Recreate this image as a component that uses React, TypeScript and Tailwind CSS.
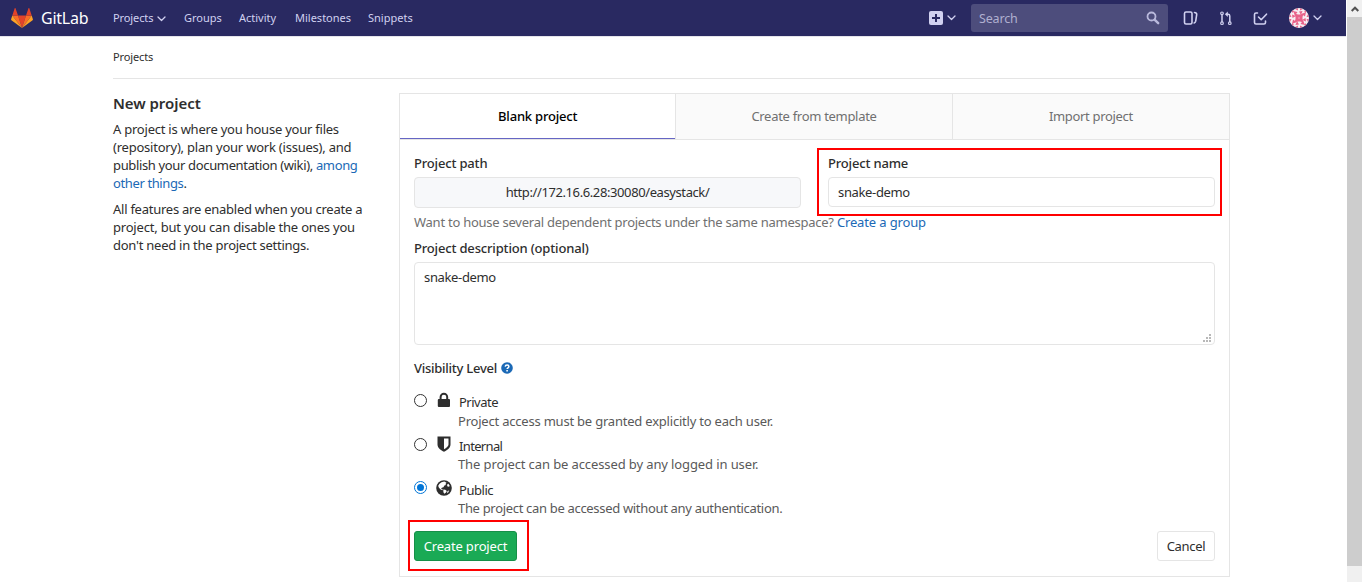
import React from "react";

const Chevron = ({ className = "" }: { className?: string }) => (
  <svg className={className} width="9" height="6" viewBox="0 0 9 6" fill="none" stroke="currentColor" strokeWidth="1.300" strokeLinecap="round" strokeLinejoin="round">
    <path d="M1 1l3.500 3.500L8 1" />
  </svg>
);

const Logo = () => (
  <svg width="22" height="20" viewBox="0 0 22 20">
    <path fill="#e24329" d="M11 20L15 7.6H7z" />
    <path fill="#fc6d26" d="M11 20L7 7.6H1.3z" />
    <path fill="#fca326" d="M1.3 7.6L.1 11.3c-.1.4 0 .8.3 1L11 20z" />
    <path fill="#e24329" d="M1.3 7.6H7L4.5.3c-.1-.4-.7-.4-.8 0z" />
    <path fill="#fc6d26" d="M11 20l4-12.4h5.7z" />
    <path fill="#fca326" d="M20.7 7.6l1.2 3.7c.1.4 0 .8-.3 1L11 20z" />
    <path fill="#e24329" d="M20.7 7.6H15L17.5.3c.1-.4.7-.4.8 0z" />
  </svg>
);

const Avatar = () => (
  <svg width="20" height="20" viewBox="0 0 20 20">
    <defs><clipPath id="round"><circle cx="10" cy="10" r="10" /></clipPath></defs>
    <g clipPath="url(#round)">
      <path fill="#f6eef2" d="M0 0h20v20H0z" />
      <g fill="#e8638a">
        <path d="M5.500 5.500l3.500 1h2l3.500-1-1 3.500v2l1 3.500-3.500-1H9l-3.500 1 1-3.500V9z" />
        <path d="M4 3l4.500 1L6 7.500zM17 4l-1 4.500L12.500 6zM16 17l-4.500-1L14 12.500zM3 16l1-4.500L7.500 14z" />
        <path d="M10 3.500l3.500-.5-1.500 4zM16.500 10l.5 3.500-4-1.500zM10 16.500l-3.500.5 1.500-4zM3.500 10L3 6.500 7 8z" />
        <path d="M6 1l3-1v2.500zM11 0l3 1-3 1.500zM19 6l1 3h-2.500zM20 11l-1 3-1.500-3zM14 19l-3 1v-2.500zM9 20l-3-1 3-1.500zM1 14l-1-3h2.500zM0 9l1-3 1.500 3z" />
        <path d="M3 2l2 1-2 2zM17 2v3l-2-2zM17 18l-2-1 2-2zM3 18v-3l2 2z" />
      </g>
      <path fill="#f6eef2" d="M9.500 9.500h1v1h-1z" />
    </g>
  </svg>
);

const Lock = () => (
  <svg width="14" height="16" viewBox="0 0 14 16">
    <rect x="0.800" y="7" width="12.200" height="8" rx="1" fill="#2e2e2e" />
    <path d="M3.600 7.500V5a3.300 3.300 0 0 1 6.600 0v2.500" fill="none" stroke="#2e2e2e" strokeWidth="2" />
  </svg>
);

const Shield = () => (
  <svg width="14" height="16" viewBox="0 0 14 16" fill="#2e2e2e">
    <path fillRule="evenodd" d="M.5.5h13v8c0 3.400-3.600 6-6.500 7.200C4.100 14.500.5 11.900.5 8.500zM7 2.500v10.700c2.400-1.300 4.500-2.900 4.500-4.700v-6z" />
  </svg>
);

const Globe = () => (
  <svg width="16" height="16" viewBox="0 0 16 16">
    <circle cx="8" cy="8" r="7.800" fill="#2e2e2e" />
    <path fill="#fff" d="M5.500 2.200l2.800-.6 2.200 1.100-1 1.200.4 1-1.500.7-1 1.700-1.600.5-.7 1 1.800.6-.6.800-2-1L2.800 7.500 2.200 5.700l1.300-2z" />
    <path fill="#fff" d="M7.300 9.500l2 .3 1.500 1.200-.8 1.500-1.600 1.300-1-1.600zM11.200 4.500l1.200-.8 1.400 2.200-1 .9-1.600-.6zM11.200 11.500l2-1.200-.8 2-1.200.9z" />
  </svg>
);

const Radio = ({ on = false }: { on?: boolean }) => (
  <span className={on
    ? "flex size-[13px] items-center justify-center rounded-full border border-[#0075d7] bg-white"
    : "mt-px flex size-[13px] items-center justify-center rounded-full border border-[#333] bg-white"}>
    {on && <span className="size-[7px] rounded-full bg-[#0075d7]" />}
  </span>
);

const levels = [
  { name: "Private", icon: <Lock />, text: "Project access must be granted explicitly to each user.", nameClass: "tracking-[-0.5px]", textClass: "pt-px tracking-[-0.21px]" },
  { name: "Internal", icon: <Shield />, text: "The project can be accessed by any logged in user.", nameClass: "tracking-[-0.65px]", textClass: "tracking-[-0.11px]" },
  { name: "Public", icon: <Globe />, text: "The project can be accessed without any authentication.", nameClass: "tracking-[-0.45px]", textClass: "tracking-[-0.32px]" },
];

const Header = () => (
  <header className="flex h-9 items-center bg-[#292961] text-[11px] leading-4 text-[#d1d1f0]">
    <div className="ml-[11px] flex w-[102px] items-center">
      <Logo />
      <span className="ml-2 text-[16px] leading-5 tracking-[-0.25px] text-white">GitLab</span>
    </div>
    <nav className="flex items-center">
      <span className="w-[71px] whitespace-nowrap tracking-[-0.1px]">Projects<Chevron className="ml-1 inline-block" /></span>
      <span className="w-[55px]">Groups</span>
      <span className="w-[56px]">Activity</span>
      <span className="w-[73px]">Milestones</span>
      <span>Snippets</span>
    </nav>
    <div className="ml-auto flex items-center">
      <svg width="14" height="14" viewBox="0 0 14 14"><rect width="14" height="14" rx="2" fill="#d1d1f0" /><path d="M7 3v8M3 7h8" stroke="#292961" strokeWidth="2" /></svg>
      <Chevron className="ml-1" />
      <div className="ml-[15px] flex h-7 w-[197px] items-center justify-between rounded-[3px] bg-[#4d4d7c] pr-2 pl-2 text-[12.5px] text-[#b0b0d0]">
        <span className="pt-px tracking-[-0.15px]">Search</span>
        <svg width="14" height="14" viewBox="0 0 14 14" fill="none" stroke="#b9b9dc"><circle cx="5.500" cy="5.500" r="4" strokeWidth="1.800" /><path d="M8.800 8.800l3.400 3.400" strokeWidth="2.400" strokeLinecap="round" /></svg>
      </div>
      <svg className="ml-[15px]" width="15" height="16" viewBox="0 0 15 16" fill="none" stroke="currentColor" strokeWidth="1.600" strokeLinecap="round"><rect x="1.500" y="2" width="7.500" height="12" rx="1.500" /><path d="M11.500 2.500c1.400 0 2.400.8 2.200 2.200l-1 6.500c-.2 1-.7 1.600-1.500 1.800" /></svg>
      <svg className="ml-[22px]" width="12" height="16" viewBox="0 0 12 16" fill="none" stroke="currentColor" strokeWidth="1.200"><circle cx="2" cy="3.300" r="1.300" /><circle cx="2" cy="13.200" r="1.300" /><circle cx="9.800" cy="13.200" r="1.300" /><path d="M2 4.600v7.300M9.800 11.900V6q0-1.700-1.700-1.700H6.800" strokeWidth="1.500" /><path d="M7.800 1.500v5.600L4.900 4.300z" fill="currentColor" stroke="none" /></svg>
      <svg className="ml-[21px]" width="15" height="16" viewBox="0 0 15 16" fill="none" stroke="currentColor" strokeWidth="1.600" strokeLinecap="round" strokeLinejoin="round"><path d="M4.500 3H3Q1.500 3 1.500 4.500v8Q1.500 14 3 14h8q1.500 0 1.500-1.500V11" /><path d="M5.500 7l2.700 2.700 5.300-5.500" /></svg>
      <span className="ml-[21px]"><Avatar /></span>
      <Chevron className="mr-6 ml-1" />
    </div>
  </header>
);

const Field = ({ label, children }: { label: string; children: React.ReactNode }) => (
  <div className="w-[387px]">
    <div className="-mt-px h-[23px] font-medium tracking-[-0.17px]">{label}</div>
    {children}
  </div>
);

export default function App() {
  return (
    <div className="flex h-[582px] w-[1362px] overflow-hidden bg-white font-['Noto_Sans','Liberation_Sans',sans-serif] text-[13px] leading-[18px] text-[#2e2e2e]">
      <div className="w-[1346px]">
        <Header />
        <div className="h-px bg-[#e3e3ea]" />
        <div className="ml-[113px] w-[1117px]">
          <div className="h-[42px] border-b border-[#e5e5e5] pt-[11px] text-[11px] tracking-[-0.12px]">Projects</div>
          <div className="flex pt-3.5">
            <aside className="w-[286px] shrink-0 whitespace-nowrap">
              <h1 className="mb-[7px] text-[15px] leading-5 font-semibold tracking-[-0.05px]">New project</h1>
              <p className="mb-2">
                <span className="block tracking-[-0.23px]">A project is where you house your files</span>
                <span className="block tracking-[-0.22px]">(repository), plan your work (issues), and</span>
                <span className="block tracking-[-0.35px]">publish your documentation (wiki), <a className="text-[#1b69b6]">among</a></span>
                <span className="block tracking-[-0.38px]"><a className="text-[#1b69b6]">other things</a>.</span>
              </p>
              <p>
                <span className="block tracking-[-0.25px]">All features are enabled when you create a</span>
                <span className="block tracking-[-0.2px]">project, but you can disable the ones you</span>
                <span className="block tracking-[-0.25px]">don't need in the project settings.</span>
              </p>
            </aside>
            <main className="h-[484px] w-[831px] border border-[#e5e5e5]">
              <div className="grid h-[46px] grid-cols-3 border-b border-[#e5e5e5] text-center leading-[44px] text-[#707070]">
                <div className="border-r border-[#e5e5e5]">
                  <div className="h-[45px] border-b border-[#6666c4] font-medium tracking-[-0.2px] text-black">Blank project</div>
                </div>
                <div className="border-r border-[#e5e5e5] bg-[#fafafa] tracking-[-0.3px]">Create from template</div>
                <div className="bg-[#fafafa] tracking-[-0.33px]">Import project</div>
              </div>
              <div className="px-3.5 pt-[15px]">
                <div className="flex justify-between">
                  <Field label="Project path">
                    <div className="flex h-[31px] items-center justify-center rounded-sm border border-[#e5e5e5] bg-[#f7f8fa] pb-px tracking-[-0.4px]">http://172.16.6.28:30080/easystack/</div>
                  </Field>
                  <div className="relative">
                    <Field label="Project name">
                      <div className="flex h-[30px] items-center rounded-sm border border-[#e5e5e5] px-[9px] tracking-[-0.35px]">snake-demo</div>
                    </Field>
                    <div className="absolute -top-[7px] -left-[11px] h-[68px] w-[405px] border-2 border-[#ff0000]" />
                  </div>
                </div>
                <div className="mt-[5px] tracking-[-0.25px] text-[#707070]">Want to house several dependent projects under the same namespace? <a className="tracking-[-0.14px] text-[#1b69b6]">Create a group</a></div>
                <div className="mt-2 font-medium tracking-[-0.17px]">Project description (optional)</div>
                <div className="relative mt-[5px] h-[83px] rounded-sm border border-[#e5e5e5] px-[9px] pt-[5px] tracking-[-0.35px]">
                  snake-demo
                  <svg className="absolute right-[3px] bottom-[2px]" width="8" height="8" fill="#b8b8b8"><path d="M6 0h2v2H6zM3 3h2v2H3zM6 3h2v2H6zM0 6h2v2H0zM3 6h2v2H3zM6 6h2v2H6z" /></svg>
                </div>
                <div className="mt-[14px] flex items-center font-medium tracking-[-0.26px]">Visibility Level
                  <svg className="ml-1" width="12" height="12" viewBox="0 0 12 12"><circle cx="6" cy="6" r="5.800" fill="#1b69b6" /><path d="M4.200 4.600c.2-2 3.700-2 3.700 0 0 1.200-1.800 1.200-1.800 2.500" fill="none" stroke="#fff" strokeWidth="1.500" /><path d="M5.300 8.100h1.600v1.500H5.300z" fill="#fff" /></svg>
                </div>
                <div className="pt-[15px]">
                  {levels.map((l) => (
                    <div key={l.name} className="flex h-11">
                      <div className="pt-px"><Radio on={l.name === "Public"} /></div>
                      <div className="ml-[9px] flex h-4 w-4 items-center justify-center">{l.icon}</div>
                      <div className="ml-1.5">
                        <div className={"pt-px pl-px leading-[18px] " + l.nameClass}>{l.name}</div>
                        <div className={"text-[#595959] " + l.textClass}>{l.text}</div>
                      </div>
                    </div>
                  ))}
                </div>
                <div className="mt-[7px] flex justify-between">
                  <div className="relative">
                    <button className="h-[30px] w-[103px] rounded-[3px] border border-[#168f48] bg-[#1aaa55] tracking-[-0.17px] text-white">Create project</button>
                    <div className="absolute -top-[11px] -left-[6px] h-[51px] w-[121px] border-2 border-[#ff0000]" />
                  </div>
                  <button className="h-[30px] w-[58px] rounded-[3px] border border-[#e5e5e5] tracking-[-0.3px]">Cancel</button>
                </div>
              </div>
            </main>
          </div>
        </div>
      </div>
      <div className="ml-px w-[15px] bg-[#f0f0f0]">
        <div className="flex h-[17px] items-center justify-center pt-px">
          <svg width="8" height="6" viewBox="0 0 8 6" fill="none" stroke="#505050" strokeWidth="2"><path d="M.7 5L4 1.700 7.300 5" /></svg>
        </div>
        <div className="h-[549px] bg-[#cdcdcd]" />
      </div>
    </div>
  );
}
